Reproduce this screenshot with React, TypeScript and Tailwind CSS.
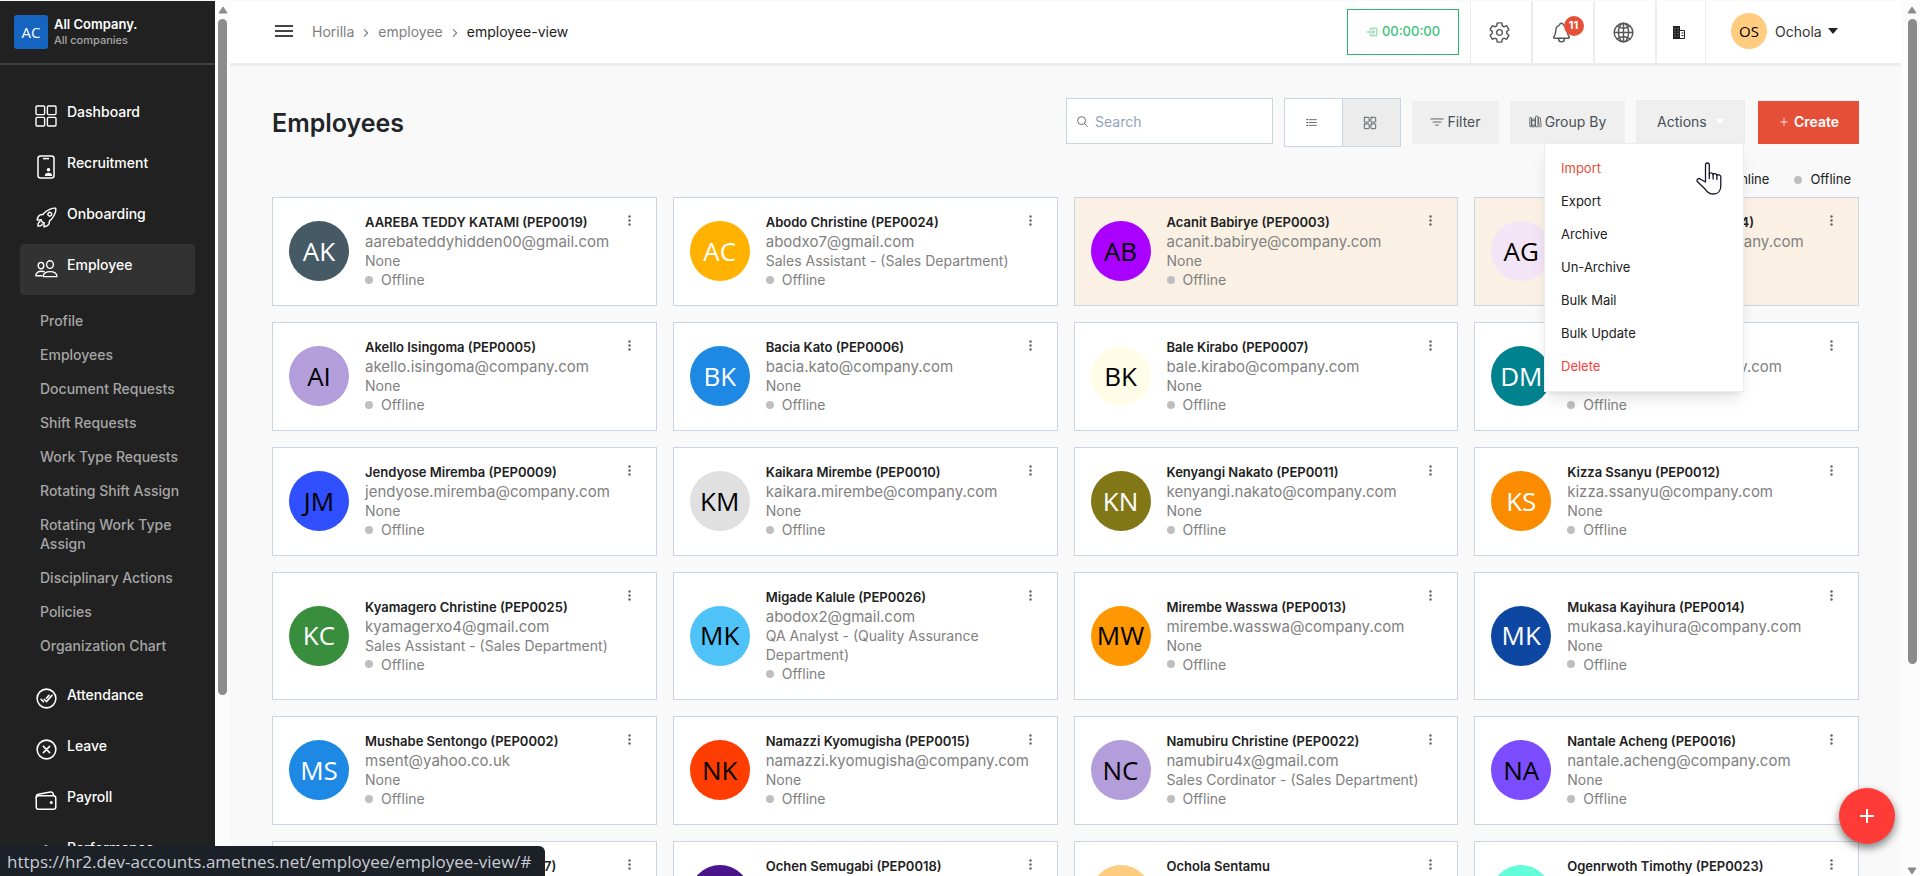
import React from "react";
import {
  IoAddOutline,
  IoCheckmarkDoneCircleOutline,
  IoChevronForward,
  IoCloseCircleOutline,
  IoEllipsisVertical,
  IoEnterOutline,
  IoFilterOutline,
  IoGlobeOutline,
  IoGridOutline,
  IoLibraryOutline,
  IoListOutline,
  IoNotificationsOutline,
  IoRocketOutline,
  IoSearchOutline,
  IoSettingsOutline,
  IoSpeedometerOutline,
  IoWalletOutline,
} from "react-icons/io5";

const DashboardIcon = () => (
  <svg width="22" height="22" viewBox="0 0 22 22" fill="none" stroke="currentColor" strokeWidth="1.4">
    <rect x="1" y="1" width="8.600" height="8.600" rx="1" />
    <rect x="12.400" y="1" width="8.600" height="8.600" rx="1" />
    <rect x="1" y="12.400" width="8.600" height="8.600" rx="1" />
    <rect x="12.400" y="12.400" width="8.600" height="8.600" rx="1" />
  </svg>
);

const RecruitmentIcon = () => (
  <svg width="22" height="24" viewBox="0 0 22 24" fill="none" stroke="currentColor">
    <rect x="3" y="1" width="16" height="22" rx="2.5" strokeWidth="1.5" />
    <path d="M8 3.6h6" strokeWidth="1.5" />
    <circle cx="13.5" cy="14.8" r="1.8" fill="currentColor" stroke="none" />
    <path d="M9.8 21c0-2.2 1.5-3.2 3.7-3.2s3.7 1 3.7 3.2z" fill="currentColor" stroke="none" />
  </svg>
);

const EmployeeIcon = () => (
  <svg width="23" height="18" viewBox="0 0 23 18" fill="none" stroke="currentColor" strokeWidth="1.4">
    <ellipse cx="15" cy="4.6" rx="3.4" ry="3.8" />
    <ellipse cx="6" cy="5.6" rx="2.8" ry="3.2" />
    <path d="M8.4 16.6c-.6-3.4 3-5 6.7-5s7.300 1.600 6.700 5z" />
    <path d="M7.600 15.800H1c-.5-2.800 2.200-4.600 5.500-4.600 1.200 0 2.300.2 3.200.7" />
  </svg>
);

const BuildingIcon = () => (
  <svg width="12" height="13" viewBox="0 0 12 13" fill="none">
    <path d="M0 0h7v13H0z" fill="#212121" />
    <path d="M1.500 2.500h1m2 0h1m-4 2.500h1m2 0h1m-4 2.500h1m2 0h1m-4 2.500h1m2 0h1" stroke="#999" />
    <path d="M7 4.500h4.500V12.500H7M8.500 7h2m-2 2.500h2" stroke="#212121" />
  </svg>
);

const HandCursor = () => (
  <svg width="26" height="33" viewBox="0 0 26 33" fill="#fff" stroke="#16162c" strokeWidth="1.300" strokeLinejoin="round" strokeLinecap="round">
    <path d="M9.500 20V3c0-1.300.8-2 1.900-2s1.900.7 1.900 2v9.500c0-2.200 3.800-2 3.800.4 0-1.900 3.800-1.600 3.800.7 0-1.500 3.900-1.100 3.900 1.200V24c0 4.700-2.800 8-7.300 8-3.500 0-5.900-1.300-8.200-4.700L1.300 19.500c-1-2 1.300-4 3.300-2.300z" />
    <path d="M13.300 12v4.500m3.800-4v4.500m3.800-3.500v4" fill="none" />
  </svg>
);

const subMenu = [
  "Profile",
  "Employees",
  "Document Requests",
  "Shift Requests",
  "Work Type Requests",
  "Rotating Shift Assign",
  "Rotating Work Type Assign",
  "Disciplinary Actions",
  "Policies",
  "Organization Chart",
];

const menuActions = ["Import", "Export", "Archive", "Un-Archive", "Bulk Mail", "Bulk Update", "Delete"];

type Employee = {
  initials: string;
  name: string;
  email: string;
  role?: string;
  avatar: string;
  highlight?: boolean;
};

const employees: Employee[] = [
  { initials: "AK", name: "AAREBA TEDDY KATAMI (PEP0019)", email: "aarebateddyhidden00@gmail.com", avatar: "bg-[#455a64] text-white" },
  { initials: "AC", name: "Abodo Christine (PEP0024)", email: "abodxo7@gmail.com", role: "Sales Assistant - (Sales Department)", avatar: "bg-[#ffb300] text-white" },
  { initials: "AB", name: "Acanit Babirye (PEP0003)", email: "acanit.babirye@company.com", avatar: "bg-[#aa00ff] text-black", highlight: true },
  { initials: "AG", name: "Adyeri Guwedeiko (PEP0004)", email: "adyeri.guwedeko@company.com", avatar: "bg-[#f3e5f5] text-black", highlight: true },
  { initials: "AI", name: "Akello Isingoma (PEP0005)", email: "akello.isingoma@company.com", avatar: "bg-[#b39ddb] text-black" },
  { initials: "BK", name: "Bacia Kato (PEP0006)", email: "bacia.kato@company.com", avatar: "bg-[#1e88e5] text-white" },
  { initials: "BK", name: "Bale Kirabo (PEP0007)", email: "bale.kirabo@company.com", avatar: "bg-[#fffde7] text-black" },
  { initials: "DM", name: "Desta Mukono (PEP0008)", email: "desta.mukono@company.com", avatar: "bg-[#00838f] text-white" },
  { initials: "JM", name: "Jendyose Miremba (PEP0009)", email: "jendyose.miremba@company.com", avatar: "bg-[#304ffe] text-black" },
  { initials: "KM", name: "Kaikara Mirembe (PEP0010)", email: "kaikara.mirembe@company.com", avatar: "bg-[#e0e0e0] text-black" },
  { initials: "KN", name: "Kenyangi Nakato (PEP0011)", email: "kenyangi.nakato@company.com", avatar: "bg-[#827717] text-white" },
  { initials: "KS", name: "Kizza Ssanyu (PEP0012)", email: "kizza.ssanyu@company.com", avatar: "bg-[#fb8c00] text-white" },
  { initials: "KC", name: "Kyamagero Christine (PEP0025)", email: "kyamagerxo4@gmail.com", role: "Sales Assistant - (Sales Department)", avatar: "bg-[#388e3c] text-white" },
  { initials: "MK", name: "Migade Kalule (PEP0026)", email: "abodox2@gmail.com", role: "QA Analyst - (Quality Assurance Department)", avatar: "bg-[#4fc3f7] text-black" },
  { initials: "MW", name: "Mirembe Wasswa (PEP0013)", email: "mirembe.wasswa@company.com", avatar: "bg-[#ff9800] text-black" },
  { initials: "MK", name: "Mukasa Kayihura (PEP0014)", email: "mukasa.kayihura@company.com", avatar: "bg-[#0d47a1] text-white" },
  { initials: "MS", name: "Mushabe Sentongo (PEP0002)", email: "msent@yahoo.co.uk", avatar: "bg-[#1e88e5] text-white" },
  { initials: "NK", name: "Namazzi Kyomugisha (PEP0015)", email: "namazzi.kyomugisha@company.com", avatar: "bg-[#ff3d00] text-black" },
  { initials: "NC", name: "Namubiru Christine (PEP0022)", email: "namubiru4x@gmail.com", role: "Sales Cordinator - (Sales Department)", avatar: "bg-[#b39ddb] text-black" },
  { initials: "NA", name: "Nantale Acheng (PEP0016)", email: "nantale.acheng@company.com", avatar: "bg-[#7c4dff] text-black" },
  { initials: "NK", name: "Nsubuga Kayondoh (PEP0017)", email: "nsubuga.kayondo@company.com", avatar: "bg-white text-black" },
  { initials: "OS", name: "Ochen Semugabi (PEP0018)", email: "ochen.semugabi@company.com", avatar: "bg-[#4a148c] text-white" },
  { initials: "OS", name: "Ochola Sentamu", email: "ochola.sentamu@company.com", avatar: "bg-[#ffcc80] text-black" },
  { initials: "OT", name: "Ogenrwoth Timothy (PEP0023)", email: "ogenrwoth.timothy@gmail.com", avatar: "bg-[#64ffda] text-black" },
];

const MenuItem = ({ icon, label, active }: { icon: React.ReactNode; label: string; active?: boolean }) => (
  <a
    href="#"
    className={`mx-5 flex h-[51px] shrink-0 items-start rounded px-[15px] text-[14px] font-medium text-white ${active ? "bg-[#323232]" : ""}`}
  >
    <span className="flex h-[49px] w-[22px] items-center justify-center">
      <span className="shrink-0">{icon}</span>
    </span>
    <span className="ml-[10px] mt-[11px] leading-5">{label}</span>
  </a>
);

const Scrollbar = ({ thumb, bottomArrow }: { thumb: string; bottomArrow?: boolean }) => (
  <div className="flex h-full w-[9px] flex-col items-center pt-[6px]">
    <svg width="10" height="8" viewBox="0 0 10 8" className="shrink-0">
      <path d="M5 1 9 7H1z" fill="#8b8b8b" stroke="#8b8b8b" strokeLinejoin="round" />
    </svg>
    <div className={`mt-[5px] w-[9px] rounded-full bg-[#8b8b8b] ${thumb}`} />
    {bottomArrow && (
      <svg width="10" height="8" viewBox="0 0 10 8" className="mt-auto mb-[1px] shrink-0">
        <path d="M5 7 9 1H1z" fill="#8b8b8b" stroke="#8b8b8b" strokeLinejoin="round" />
      </svg>
    )}
  </div>
);

const Sidebar = () => (
  <aside className="mt-px flex w-[215px] shrink-0 flex-col overflow-hidden bg-[#212121]">
    <div className="flex h-16 shrink-0 items-center border-b-2 border-[#414141] pl-[14px]">
      <span className="flex h-[34px] w-[34px] items-center justify-center rounded-[3px] bg-[#1565c0] font-['Open_Sans'] text-[15px] text-white">
        AC
      </span>
      <div className="ml-[6px] flex flex-col">
        <span className="text-[13px] font-semibold leading-4 text-white">All Company.</span>
        <span className="text-[11px] font-medium leading-4 text-[#a6a6a6]">All companies</span>
      </div>
    </div>
    <nav className="flex flex-col pt-[26px]">
      <MenuItem icon={<DashboardIcon />} label="Dashboard" />
      <MenuItem icon={<RecruitmentIcon />} label="Recruitment" />
      <MenuItem icon={<IoRocketOutline size={23} />} label="Onboarding" />
      <MenuItem icon={<EmployeeIcon />} label="Employee" active />
      <div className="mb-3 flex flex-col pt-2">
        {subMenu.map((item) => (
          <a key={item} href="#" className="pt-2 pr-8 pb-[7px] pl-10 text-[14px] font-medium leading-[19px] text-[#a6a6a6]">
            {item}
          </a>
        ))}
      </div>
      <MenuItem icon={<IoCheckmarkDoneCircleOutline size={25} />} label="Attendance" />
      <MenuItem icon={<IoCloseCircleOutline size={25} />} label="Leave" />
      <MenuItem icon={<IoWalletOutline size={24} />} label="Payroll" />
      <MenuItem icon={<IoSpeedometerOutline size={16} />} label="Performance" />
    </nav>
  </aside>
);

const Header = () => (
  <header className="mt-px flex h-[65px] shrink-0 items-stretch border-b-[3px] border-[#ececec] bg-white pl-[45px]">
    <div className="flex items-center pb-[2px] text-[14px]">
      <button aria-label="Toggle menu" className="mr-[19px] flex flex-col gap-[3px]">
        <span className="h-[2px] w-[18px] bg-[#444]" />
        <span className="h-[2px] w-[18px] bg-[#444]" />
        <span className="h-[2px] w-[18px] bg-[#444]" />
      </button>
      <a href="#" className="text-[#808080]">Horilla</a>
      <IoChevronForward size={12} className="mx-[6px] mt-1 text-[#808080]" />
      <a href="#" className="text-[#808080]">employee</a>
      <IoChevronForward size={12} className="mx-[6px] mt-1 text-[#808080]" />
      <a href="#" className="text-[#212121]">employee-view</a>
    </div>
    <div className="ml-auto flex items-stretch text-[#555]">
      <button className="mt-2 mr-[11px] flex h-[46px] w-[112px] items-center justify-center gap-1 border border-[#28b76b] text-[13px] font-medium text-[#3cc27a]">
        <IoEnterOutline size={12} />
        00:00:00
      </button>
      <button aria-label="Settings" className="flex w-[61px] items-center justify-center border-l border-[#ececec] pr-1">
        <IoSettingsOutline size={23} />
      </button>
      <button aria-label="Notifications" className="flex w-[62px] items-center justify-center border-l-2 border-[#ececec]">
        <span className="relative">
          <IoNotificationsOutline size={23} className="mr-1" />
          <span className="absolute -top-[5px] left-[14px] flex h-5 w-5 items-center justify-center rounded-full bg-[#e54f38] text-[11px] font-bold text-white">
            11
          </span>
        </span>
      </button>
      <button aria-label="Language" className="flex w-[62px] items-center justify-center border-l-2 border-[#ececec] pr-1">
        <IoGlobeOutline size={23} />
      </button>
      <button aria-label="Company" className="flex w-[51px] items-center justify-center border-x border-l-2 border-[#ececec] pr-1">
        <BuildingIcon />
      </button>
      <button className="flex w-[195px] items-center pb-[2px] pl-[25px] text-[14px] text-[#333]">
        <span className="mr-2 flex h-9 w-9 items-center justify-center rounded-full bg-[#ffcc80] font-['Open_Sans'] text-[15px] text-black">
          OS
        </span>
        Ochola
        <svg width="10" height="6" viewBox="0 0 10 6" className="ml-[6px]">
          <path d="M0 0h10L5 6z" fill="#212121" />
        </svg>
      </button>
    </div>
  </header>
);

const ActionsMenu = () => (
  <div className="absolute top-[43px] right-[1px] z-10 flex w-[200px] flex-col border border-[#ececec] bg-white py-2 shadow-lg">
    {menuActions.map((item) => (
      <a
        key={item}
        href="#"
        className={`px-4 text-[13px] leading-[33px] ${item === "Import" ? "text-[#e54f38]" : item === "Delete" ? "text-[#ff3b3b]" : "text-[#212121]"}`}
      >
        {item}
      </a>
    ))}
    <span className="pointer-events-none absolute top-[18px] right-[21px]">
      <HandCursor />
    </span>
  </div>
);

const Toolbar = () => (
  <div className="flex items-start pt-[32px]">
    <h1 className="mt-[9px] text-[25px] leading-8 font-semibold text-[#212529]">Employees</h1>
    <div className="ml-auto flex items-start gap-[11px] text-[14px] text-[#495057]">
      <label className="flex h-[46px] w-[207px] items-center gap-[6px] border border-[#cbd5e1] bg-white pl-[9px]">
        <IoSearchOutline size={13} className="shrink-0" />
        <input type="text" aria-label="Search" placeholder="Search" className="w-full min-w-0 text-[14px] outline-none placeholder:text-[#94a3b8]" />
      </label>
      <div className="flex h-[49px] w-[117px] border border-[#cbd5e1]">
        <button aria-label="List view" className="flex flex-1 items-center justify-center bg-white pr-1">
          <IoListOutline size={13} />
        </button>
        <button aria-label="Card view" className="flex flex-1 items-center justify-center border-l border-[#cbd5e1] bg-[#ececec] pr-1">
          <IoGridOutline size={14} />
        </button>
      </div>
      <button className="mt-[3px] flex h-[43px] w-[87px] items-center justify-center gap-[3px] bg-[#efefef] pb-[2px]">
        <IoFilterOutline size={14} />
        Filter
      </button>
      <button className="mt-[3px] flex h-[43px] w-[115px] items-center justify-center gap-[3px] bg-[#efefef] pb-[2px]">
        <IoLibraryOutline size={13} />
        Group By
      </button>
      <div className="relative mt-[2px] mr-[2px]">
        <button className="flex h-[45px] w-[109px] items-center border border-[#e9ecf0] bg-[#efefef] pb-[2px] pl-5">
          Actions
          <svg width="8" height="5" viewBox="0 0 8 5" className="ml-[9px]">
            <path d="M0 0h8L4 5z" fill="#fff" />
          </svg>
        </button>
        <ActionsMenu />
      </div>
      <button className="mt-[3px] flex h-[43px] w-[101px] items-center justify-center gap-1 bg-[#e54f38] pb-[2px] font-semibold text-white">
        <IoAddOutline size={12} />
        Create
      </button>
    </div>
  </div>
);

const Status = () => (
  <span className="flex items-center text-[14px] leading-[19px] text-[#808080]">
    <span className="mr-2 h-2 w-2 rounded-full bg-[#bfbfbf]" />
    Offline
  </span>
);

const EmployeeCard = ({ employee }: { employee: Employee }) => (
  <article className={`flex items-center border border-[#cbd5e1] px-4 pt-[15px] pb-4 ${employee.highlight ? "bg-[#faf1e4]" : "bg-white"}`}>
    <span className={`mr-4 flex h-[60px] w-[60px] shrink-0 items-center justify-center rounded-full font-['Open_Sans'] text-[26px] ${employee.avatar}`}>
      {employee.initials}
    </span>
    <div className="min-w-0 flex-1">
      <h2 className="text-[13px] leading-[19px] font-semibold whitespace-nowrap text-[#212121]">{employee.name}</h2>
      <p className="text-[15px] leading-[19px] whitespace-nowrap text-[#808080]">{employee.email}</p>
      <p className="text-[14px] leading-[19px] text-[#808080]">{employee.role || "None"}</p>
      <Status />
    </div>
    <button aria-label="More options" className="mr-1 -ml-2 self-start pt-px text-[#666]">
      <IoEllipsisVertical size={13} />
    </button>
  </article>
);

const App = () => {
  return (
    <div className="flex h-screen overflow-hidden bg-[#f9f9f9] font-['Inter',sans-serif]">
      <Sidebar />
      <div className="flex w-[15px] shrink-0 justify-center bg-[#fcfcfc]">
        <Scrollbar thumb="h-[676px]" />
      </div>
      <div className="flex min-w-0 flex-1 flex-col overflow-hidden">
        <Header />
        <main className="px-[42px]">
          <Toolbar />
          <div className="mt-[23px] flex h-[27px] items-start justify-end gap-[25px] pr-2 text-[13px] leading-[19px] text-[#212121]">
            <span className="flex items-center gap-2">
              <span className="h-2 w-2 rounded-full bg-[#9acd32]" />
              Online
            </span>
            <span className="flex items-center gap-2">
              <span className="h-2 w-2 rounded-full bg-[#bfbfbf]" />
              Offline
            </span>
          </div>
          <div className="grid grid-cols-4 gap-4">
            {employees.map((employee) => (
              <EmployeeCard key={employee.name} employee={employee} />
            ))}
          </div>
        </main>
      </div>
      <div className="flex w-[19px] shrink-0 justify-center bg-[#fcfcfc] pl-[3px]">
        <Scrollbar thumb="h-[645px]" bottomArrow />
      </div>
      <button
        aria-label="Quick actions"
        className="fixed right-[25px] bottom-8 flex h-14 w-14 items-center justify-center rounded-full bg-[#ff3b38] text-white shadow-[0_4px_8px_rgba(0,0,0,0.5)]"
      >
        <svg width="16" height="16" viewBox="0 0 16 16" stroke="currentColor" strokeWidth="2">
          <path d="M8 1v14M1 8h14" />
        </svg>
      </button>
      <div className="fixed bottom-0 left-0 z-20 flex h-[30px] w-[545px] items-center rounded-tr-md bg-[#1c2027] pt-[2px] pl-[7px] font-['Open_Sans'] text-[17px] whitespace-nowrap text-[#c9cdd3]">
        https://hr2.dev-accounts.ametnes.net/employee/employee-view/#
      </div>
    </div>
  );
};

export default App;
